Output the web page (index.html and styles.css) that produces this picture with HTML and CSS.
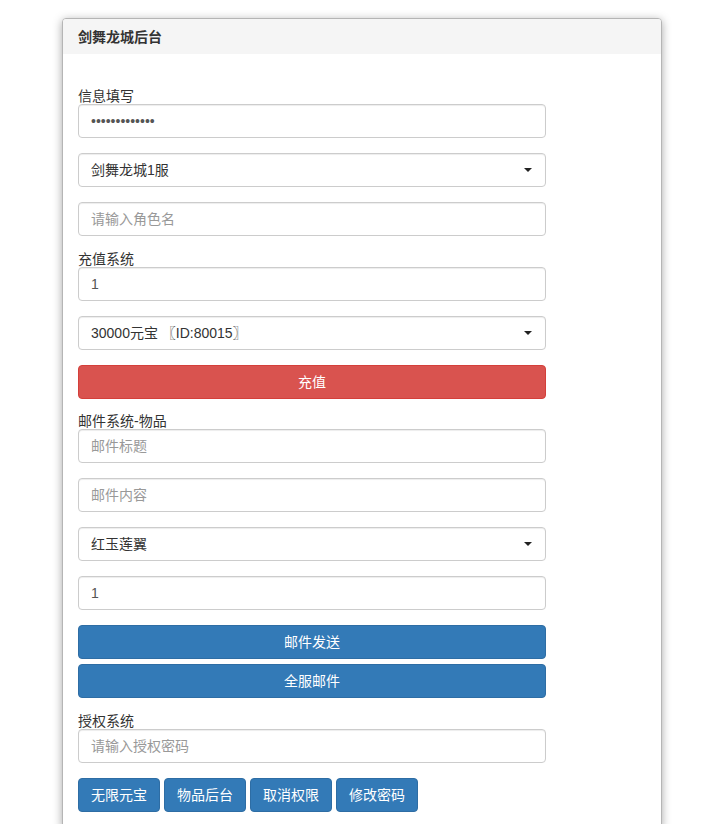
FILE: index.html
```html
<!DOCTYPE html>
<html lang="zh-CN">
<head>
<meta charset="utf-8">
<title>剑舞龙城后台</title>
<link rel="stylesheet" href="styles.css">
</head>
<body>
<div class="panel">
  <div class="panel-heading">剑舞龙城后台</div>
  <div class="panel-body">
    <form class="form">
      <label class="label">信息填写</label>
      <input class="control" type="password" value="abcdefghijklm">
      <div class="select-wrap">
        <select class="control select"><option>剑舞龙城1服</option></select>
        <span class="caret"></span>
      </div>
      <input class="control" type="text" placeholder="请输入角色名">

      <label class="label">充值系统</label>
      <input class="control" type="text" value="1">
      <div class="select-wrap">
        <select class="control select"><option>30000元宝 〖ID:80015〗</option></select>
        <span class="caret"></span>
      </div>
      <button type="button" class="btn btn-danger btn-block btn-charge">充值</button>

      <label class="label">邮件系统-物品</label>
      <input class="control" type="text" placeholder="邮件标题">
      <input class="control" type="text" placeholder="邮件内容">
      <div class="select-wrap">
        <select class="control select"><option>红玉莲翼</option></select>
        <span class="caret"></span>
      </div>
      <input class="control" type="text" value="1">
      <button type="button" class="btn btn-primary btn-block btn-tight">邮件发送</button>
      <button type="button" class="btn btn-primary btn-block">全服邮件</button>

      <label class="label">授权系统</label>
      <input class="control" type="text" placeholder="请输入授权密码">
      <div class="btn-row">
        <button type="button" class="btn btn-primary">无限元宝</button>
        <button type="button" class="btn btn-primary">物品后台</button>
        <button type="button" class="btn btn-primary">取消权限</button>
        <button type="button" class="btn btn-primary">修改密码</button>
      </div>
    </form>
  </div>
</div>
</body>
</html>
```

FILE: styles.css
```css
* { box-sizing: border-box; }

body {
  margin: 0;
  background: #fff;
  font-family: "Liberation Sans", "Noto Sans CJK SC", sans-serif;
  font-size: 14px;
  color: #333;
}

.panel {
  width: 600px;
  margin: 18px auto 0;
  border: 1px solid #b5b5b5;
  border-radius: 4px;
  background: #fff;
  box-shadow: 0 2px 10px rgba(0, 0, 0, 0.35);
  overflow: hidden;
}

.panel-heading {
  padding: 10px 15px 9px;
  line-height: 16px;
  background: #f5f5f5;
  font-weight: bold;
  color: #333;
}

.panel-body {
  padding: 34px 15px 15px;
}

.form {
  width: 468px;
  display: flex;
  flex-direction: column;
}

.label {
  display: block;
  line-height: 16px;
  color: #333;
}

.control {
  display: block;
  width: 100%;
  height: 34px;
  margin: 0 0 15px;
  padding: 6px 12px;
  border: 1px solid #ccc;
  border-radius: 4px;
  background: #fff;
  font-family: inherit;
  font-size: 14px;
  color: #555;
  box-shadow: inset 0 1px 1px rgba(0, 0, 0, 0.075);
}

.control::placeholder { color: #999; }

.select-wrap {
  position: relative;
}

.select {
  appearance: none;
  -webkit-appearance: none;
  color: #333;
}

.caret {
  position: absolute;
  right: 14px;
  top: 15px;
  width: 0;
  height: 0;
  border-left: 4px solid transparent;
  border-right: 4px solid transparent;
  border-top: 4px solid #222;
  pointer-events: none;
}

.btn {
  display: inline-block;
  height: 34px;
  padding: 6px 12px;
  border: 1px solid transparent;
  border-radius: 4px;
  font-family: inherit;
  font-size: 14px;
  line-height: 20px;
  color: #fff;
  cursor: pointer;
}

.btn-block {
  display: block;
  width: 100%;
  margin-bottom: 15px;
}

.btn-charge { margin-bottom: 14px; }

.btn-tight { margin-bottom: 5px; }

.btn-danger {
  background: #d9534f;
  border-color: #d43f3a;
}

.btn-primary {
  background: #337ab7;
  border-color: #2e6da4;
}

.btn-row {
  display: flex;
  gap: 4px;
}
```
